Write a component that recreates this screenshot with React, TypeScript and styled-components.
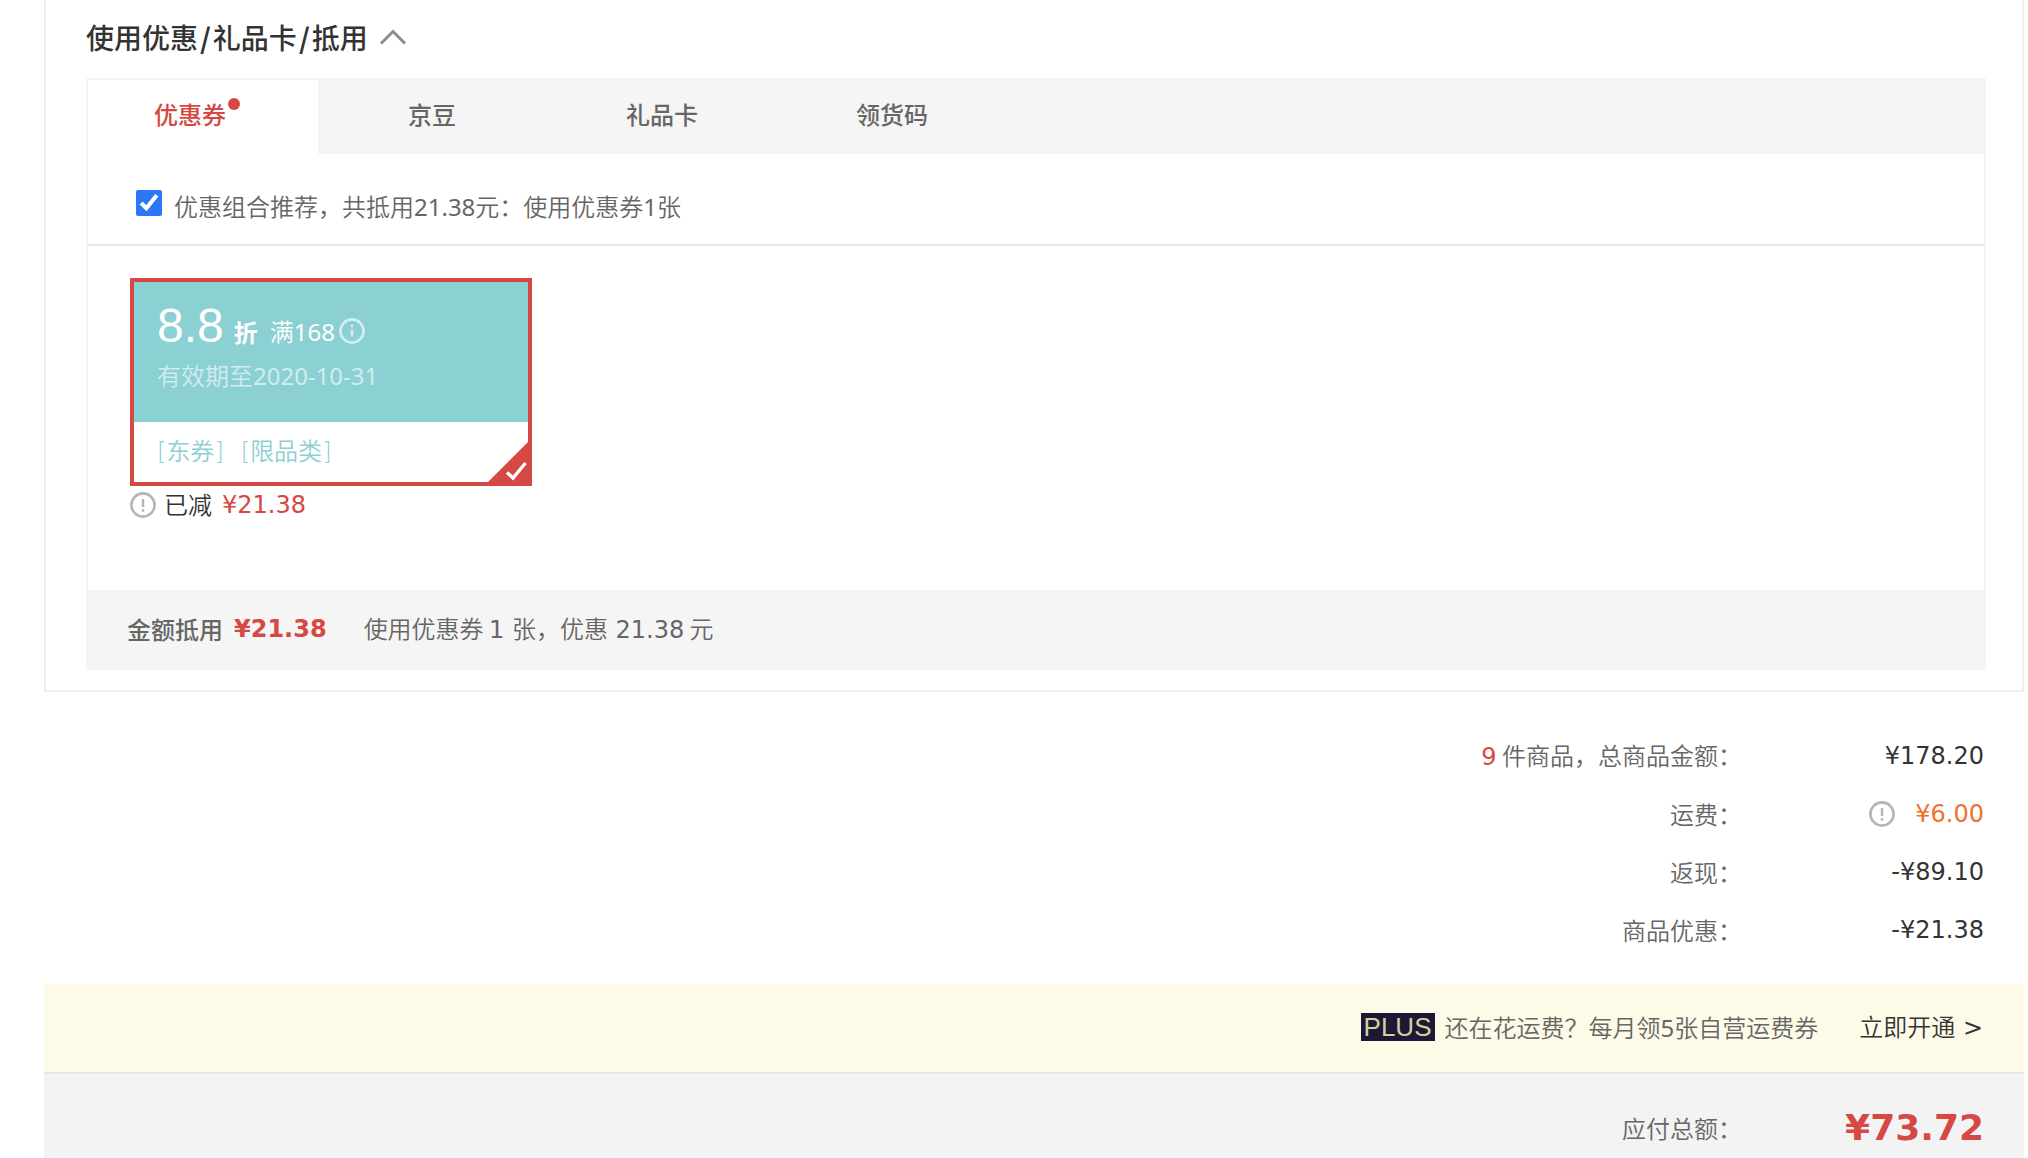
import React, { useState } from "react";
import styled, { createGlobalStyle } from "styled-components";

const color = {
  red: "#d54844",
  teal: "#8bd0d3",
  orange: "#f0702c",
  text: "#666",
  dark: "#333",
  bar: "#f5f5f5",
};
const cjk = `"Noto Sans CJK SC", sans-serif`;
const wide = `"DejaVu Sans", ${cjk}`;
const narrow = `"Noto Sans", ${cjk}`;

const GlobalStyle = createGlobalStyle`
  *, *::before, *::after { box-sizing: border-box; }
  body {
    margin: 0;
    background: #fff;
    color: ${color.text};
    font: 350 24px/36px ${cjk};
  }
  h2, p, dl, dd { margin: 0; }
  button, input { font: inherit; color: inherit; }
`;

const Page = styled.main`
  padding: 0 4px 0 44px;
`;

const Panel = styled.section`
  border: 2px solid #efefef;
  border-top: 0;
  padding: 0 36px 20px 40px;
`;

const Heading = styled.h2`
  font-size: 28px;
  font-weight: 500;
`;

const HeadingButton = styled.button`
  display: flex;
  align-items: center;
  gap: 11px;
  height: 78px;
  padding: 0 0 4px;
  border: 0;
  background: none;
  color: ${color.dark};
`;

const Slash = styled.span`
  padding: 0 2px;
  font-weight: 700;
`;

const Box = styled.div`
  border: 2px solid ${color.bar};
  border-bottom: 0;
`;

const Tabs = styled.div`
  display: flex;
  background: ${color.bar};
`;

const Tab = styled.button<{ $active: boolean }>`
  display: flex;
  align-items: center;
  justify-content: center;
  width: 230px;
  height: 74px;
  padding: 0 2px 6px 0;
  border: 0;
  font-weight: 500;
  background: ${(p) => (p.$active ? "#fff" : "transparent")};
  color: ${(p) => (p.$active ? color.red : color.text)};
`;

const Dot = styled.span`
  align-self: flex-start;
  width: 12px;
  height: 12px;
  margin: 18px 10px 0 2px;
  border-radius: 50%;
  background: ${color.red};
`;

const Recommend = styled.label`
  display: flex;
  align-items: flex-start;
  gap: 12px;
  padding: 34px 48px 20px;
  border-bottom: 2px solid #e6e6e6;
`;

const Tick = styled.input`
  width: 26px;
  height: 26px;
  margin: 2px 0 0;
  accent-color: #2b77f5;
`;

const Num = styled.span`
  font: 400 24px/24px ${narrow};
`;

const Wide = styled.span<{ $color?: string; $bold?: boolean }>`
  font-family: ${wide};
  font-weight: ${(p) => (p.$bold ? 700 : 400)};
  color: ${(p) => p.$color || "inherit"};
`;

const Bracket = styled.span`
  font-family: "DejaVu Sans", sans-serif;
  font-weight: 200;
`;

const CouponArea = styled.div`
  padding: 32px 42px 66px;
`;

const Coupon = styled.article`
  position: relative;
  width: 402px;
  border: 4px solid ${color.red};
`;

const CouponTop = styled.div`
  height: 140px;
  padding: 13px 23px 0;
  background: ${color.teal};
  color: #fff;
`;

const Offer = styled.div`
  display: flex;
  align-items: center;
  height: 62px;
`;

const Rate = styled.span`
  font-family: "Liberation Sans", sans-serif;
  font-size: 48px;
  font-weight: 400;
  line-height: 60px;
`;

const Unit = styled.strong`
  padding-top: 12px;
  margin: 0 12px 0 10px;
  font-weight: 700;
`;

const Limit = styled.span`
  display: flex;
  align-items: center;
  gap: 4px;
  padding-top: 9px;
`;

const Expiry = styled.p`
  opacity: 0.6;
`;

const CouponTags = styled.div`
  display: flex;
  gap: 17px;
  height: 60px;
  padding: 10px 23px 0;
  color: ${color.teal};
`;

const Corner = styled.svg`
  position: absolute;
  right: -4px;
  bottom: -4px;
`;

const Saved = styled.p`
  display: flex;
  align-items: center;
  gap: 8px;
  height: 38px;
  color: ${color.dark};
`;

const SavedLabel = styled.span`
  padding: 0 2px 2px 0;
`;

const Footer = styled.div`
  display: flex;
  align-items: center;
  height: 80px;
  padding: 0 41px 2px;
  background: ${color.bar};
`;

const FooterTitle = styled.strong`
  margin-right: 11px;
  font-weight: 500;
`;

const FooterNote = styled.span`
  margin-left: 37px;
`;

const Sums = styled.dl`
  padding: 35px 40px 25px;
`;

const SumRow = styled.div<{ $height?: number }>`
  display: flex;
  justify-content: flex-end;
  align-items: center;
  height: ${(p) => p.$height || 58}px;
`;

const SumValue = styled.dd<{ $color?: string }>`
  display: flex;
  align-items: center;
  justify-content: flex-end;
  gap: 20px;
  width: 242px;
  font-family: ${wide};
  font-weight: 400;
  color: ${(p) => p.$color || color.dark};
`;

const Promo = styled.div`
  display: flex;
  align-items: center;
  justify-content: flex-end;
  height: 90px;
  padding: 0 41px 2px;
  border-bottom: 2px solid #e6e6e6;
  background: #fdfae8;
`;

const PlusBadge = styled.span`
  width: 74px;
  margin-right: 10px;
  background: #1d1836;
  color: #d5cf9f;
  font: 400 26px/28px "Liberation Sans", sans-serif;
  text-align: center;
`;

const PromoLink = styled.a`
  margin-left: 41px;
  color: ${color.dark};
  text-decoration: none;
`;

const Total = styled.dl`
  padding: 30px 40px 6px;
  background: #f3f3f3;
`;

const TotalValue = styled(SumValue)`
  font-size: 36px;
  font-weight: 700;
`;

function Hint({ mark, tint }: { mark: "i" | "!"; tint: string }) {
  const line = mark === "!" ? "M13 7v8" : "M13 11.5v7";
  const dotY = mark === "!" ? 18.5 : 8;
  return (
    <svg width="26" height="26" viewBox="0 0 26 26" fill="none" aria-hidden="true">
      <circle cx="13" cy="13" r="11.6" stroke={tint} strokeWidth="2.6" />
      <path d={line} stroke={tint} strokeWidth="2.4" />
      <circle cx="13" cy={dotY} r="1.4" fill={tint} />
    </svg>
  );
}

const tabs = ["优惠券", "京豆", "礼品卡", "领货码"];

export default function App() {
  const [active, setActive] = useState(0);
  const [combo, setCombo] = useState(true);
  return (
    <Page>
      <GlobalStyle />
      <Panel>
        <Heading>
          <HeadingButton type="button" aria-expanded="true">
            <span>
              使用优惠<Slash>/</Slash>礼品卡<Slash>/</Slash>抵用
            </span>
            <svg width="28" height="16" viewBox="0 0 28 16" fill="none" aria-hidden="true">
              <path d="M2 14.5 14 2.5l12 12" stroke="#8c8c8c" strokeWidth="3" />
            </svg>
          </HeadingButton>
        </Heading>
        <Box>
          <Tabs role="tablist">
            {tabs.map((name, i) => (
              <Tab
                key={name}
                type="button"
                role="tab"
                aria-selected={i === active}
                $active={i === active}
                onClick={() => setActive(i)}
              >
                {name}
                {i === 0 && <Dot />}
              </Tab>
            ))}
          </Tabs>
          <Recommend>
            <Tick type="checkbox" checked={combo} onChange={(e) => setCombo(e.target.checked)} />
            <span>
              优惠组合推荐，共抵用<Num>21.38</Num>元：使用优惠券<Num>1</Num>张
            </span>
          </Recommend>
          <CouponArea>
            <Coupon>
              <CouponTop>
                <Offer>
                  <Rate>8.8</Rate>
                  <Unit>折</Unit>
                  <Limit>
                    <span>
                      满<Num>168</Num>
                    </span>
                    <Hint mark="i" tint="#d4eeef" />
                  </Limit>
                </Offer>
                <Expiry>
                  有效期至<Num>2020-10-31</Num>
                </Expiry>
              </CouponTop>
              <CouponTags>
                {["东券", "限品类"].map((tag) => (
                  <span key={tag}>
                    <Bracket>[</Bracket>
                    {tag}
                    <Bracket>]</Bracket>
                  </span>
                ))}
              </CouponTags>
              <Corner width="48" height="48" viewBox="0 0 48 48" fill="none" aria-hidden="true">
                <path d="M48 0v48H0z" fill={color.red} />
                <path d="m23 34.5 6 5.500 12.500-15" stroke="#fff" strokeWidth="3.4" />
              </Corner>
            </Coupon>
            <Saved>
              <Hint mark="!" tint="#b5b5b5" />
              <SavedLabel>已减</SavedLabel>
              <Wide $color={color.red}>¥21.38</Wide>
            </Saved>
          </CouponArea>
        </Box>
        <Footer>
          <FooterTitle>金额抵用</FooterTitle>
          <Wide $bold $color={color.red}>¥21.38</Wide>
          <FooterNote>
            使用优惠券 <Wide>1 </Wide>张，优惠<Wide> 21.38</Wide> 元
          </FooterNote>
        </Footer>
      </Panel>

      <Sums>
        <SumRow>
          <dt>
            <Wide $color={color.red}>9</Wide> 件商品，总商品金额：
          </dt>
          <SumValue>¥178.20</SumValue>
        </SumRow>
        <SumRow>
          <dt>运费：</dt>
          <SumValue $color={color.orange}>
            <Hint mark="!" tint="#b5b5b5" />
            ¥6.00
          </SumValue>
        </SumRow>
        <SumRow>
          <dt>返现：</dt>
          <SumValue>-¥89.10</SumValue>
        </SumRow>
        <SumRow>
          <dt>商品优惠：</dt>
          <SumValue>-¥21.38</SumValue>
        </SumRow>
      </Sums>

      <Promo>
        <PlusBadge>PLUS</PlusBadge>
        <span>
          还在花运费？每月领<Num>5</Num>张自营运费券
        </span>
        <PromoLink href="#plus">
          立即开通<Wide> &gt;</Wide>
        </PromoLink>
      </Promo>

      <Total>
        <SumRow $height={48}>
          <dt>应付总额：</dt>
          <TotalValue $color={color.red}>¥73.72</TotalValue>
        </SumRow>
      </Total>
    </Page>
  );
}
